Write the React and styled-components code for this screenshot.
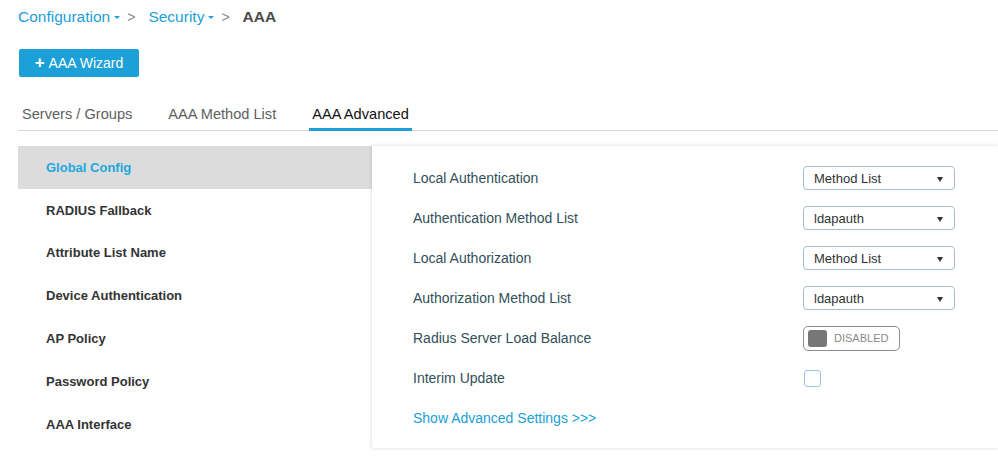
import React from "react";
import styled, { createGlobalStyle } from "styled-components";

const colors = {
  blue: "#1ba0d7",
  link: "#1a9fd6",
  text: "#333",
  label: "#30505a",
  muted: "#5e5e60",
  line: "#d8d8d8",
};

const GlobalStyle = createGlobalStyle`
  body {
    margin: 0;
    background: #fff;
    font-family: "Liberation Sans", Arial, sans-serif;
    color: ${colors.text};
  }
`;

const Page = styled.div`
  width: 998px;
  height: 466px;
  overflow: hidden;
  padding-left: 18px;
  box-sizing: border-box;
`;

const Breadcrumb = styled.div`
  display: flex;
  align-items: center;
  height: 22px;
  padding-top: 6px;
  font-size: 15.5px;
  gap: 4px;
`;
const Crumb = styled.span`
  color: ${colors.blue};
  display: flex;
  align-items: center;
  gap: 4px;
`;
const Caret = styled.span`
  display: inline-block;
  width: 0;
  height: 0;
  border-left: 3px solid transparent;
  border-right: 3px solid transparent;
  border-top: 3px solid ${colors.blue};
  margin-top: 1px;
`;
const Sep = styled.span`
  color: #888;
  font-size: 14px;
  margin: 0 9px 0 3px;
`;
const Current = styled.span`
  color: #4a4a4a;
  font-weight: bold;
  font-size: 15.5px;
`;

const WizardButton = styled.button`
  margin-top: 21px;
  margin-left: 1px;
  width: 120px;
  height: 28px;
  border: none;
  border-radius: 2px;
  background: ${colors.blue};
  color: #fff;
  font-family: inherit;
  font-size: 14px;
  display: flex;
  align-items: center;
  justify-content: center;
  gap: 4px;
  cursor: pointer;
  & > b {
    font-size: 17px;
    line-height: 1;
    margin-top: -2px;
  }
`;

const Tabs = styled.div`
  display: flex;
  margin-top: 21px;
  border-bottom: 1px solid ${colors.line};
  height: 32px;
`;
const Tab = styled.div`
  padding: 8px 3px 0;
  margin-right: 30px;
  font-size: 14.6px;
  color: ${(p) => (p.active ? "#111" : colors.muted)};
  border-bottom: 3px solid ${(p) => (p.active ? colors.blue : "transparent")};
  margin-bottom: -1px;
  box-sizing: border-box;
  &:first-child {
    padding-left: 4px;
  }
`;

const Content = styled.div`
  display: flex;
  margin-top: 15px;
`;

const Sidebar = styled.ul`
  list-style: none;
  margin: 0;
  padding: 0;
  width: 354px;
`;
const SideItem = styled.li`
  height: 42.8px;
  display: flex;
  align-items: center;
  padding-left: 28px;
  font-size: 13px;
  font-weight: bold;
  background: ${(p) => (p.active ? "#dcdcdc" : "transparent")};
  color: ${(p) => (p.active ? "#1fa8e0" : "#333")};
`;

const Panel = styled.div`
  flex: 1;
  height: 302px;
  background: #fff;
  box-shadow: 0 0 4px rgba(0, 0, 0, 0.16);
  padding: 12px 0 0 41px;
  box-sizing: border-box;
`;
const Row = styled.div`
  display: grid;
  grid-template-columns: 390px 152px;
  align-items: center;
  height: 40px;
`;
const Label = styled.div`
  font-size: 14px;
  color: ${(p) => (p.link ? colors.link : colors.label)};
`;

const Select = styled.div`
  height: 24px;
  border: 1px solid #a8bfcb;
  border-radius: 4px;
  box-sizing: border-box;
  display: flex;
  align-items: center;
  justify-content: space-between;
  padding: 0 11px 0 10px;
  font-size: 13px;
  color: #333;
  &::after {
    content: "";
    border-left: 3.5px solid transparent;
    border-right: 3.5px solid transparent;
    border-top: 5px solid #333;
    margin-top: 3px;
  }
`;

const Toggle = styled.div`
  width: 97px;
  height: 25px;
  border: 1px solid #8e8e8e;
  border-radius: 5px;
  box-sizing: border-box;
  display: flex;
  align-items: center;
  padding-left: 4px;
  gap: 7px;
  font-size: 11px;
  color: #8a8a8a;
`;
const Knob = styled.span`
  width: 19px;
  height: 17px;
  border-radius: 3px;
  background: #777;
`;

const Checkbox = styled.span`
  width: 17px;
  height: 17px;
  margin-left: 1px;
  border: 1.5px solid #9dc1e8;
  border-radius: 3px;
  box-sizing: border-box;
`;

const sideItems = [
  "Global Config",
  "RADIUS Fallback",
  "Attribute List Name",
  "Device Authentication",
  "AP Policy",
  "Password Policy",
  "AAA Interface",
];

const rows = [
  { label: "Local Authentication", select: "Method List" },
  { label: "Authentication Method List", select: "ldapauth" },
  { label: "Local Authorization", select: "Method List" },
  { label: "Authorization Method List", select: "ldapauth" },
  { label: "Radius Server Load Balance", toggle: true },
  { label: "Interim Update", check: true },
];

const App = () => {
  return (
    <Page>
      <GlobalStyle />
      <Breadcrumb>
        <Crumb>
          Configuration <Caret />
        </Crumb>
        <Sep>&gt;</Sep>
        <Crumb>
          Security <Caret />
        </Crumb>
        <Sep>&gt;</Sep>
        <Current>AAA</Current>
      </Breadcrumb>
      <WizardButton>
        <b>+</b> AAA Wizard
      </WizardButton>
      <Tabs>
        <Tab>Servers / Groups</Tab>
        <Tab>AAA Method List</Tab>
        <Tab active>AAA Advanced</Tab>
      </Tabs>
      <Content>
        <Sidebar>
          {sideItems.map((item, i) => (
            <SideItem key={item} active={i === 0}>
              {item}
            </SideItem>
          ))}
        </Sidebar>
        <Panel>
          {rows.map((r) => (
            <Row key={r.label}>
              <Label>{r.label}</Label>
              {r.select && <Select>{r.select}</Select>}
              {r.toggle && (
                <Toggle>
                  <Knob />
                  DISABLED
                </Toggle>
              )}
              {r.check && <Checkbox />}
            </Row>
          ))}
          <Row>
            <Label link>Show Advanced Settings &gt;&gt;&gt;</Label>
          </Row>
        </Panel>
      </Content>
    </Page>
  );
};

export default App;
